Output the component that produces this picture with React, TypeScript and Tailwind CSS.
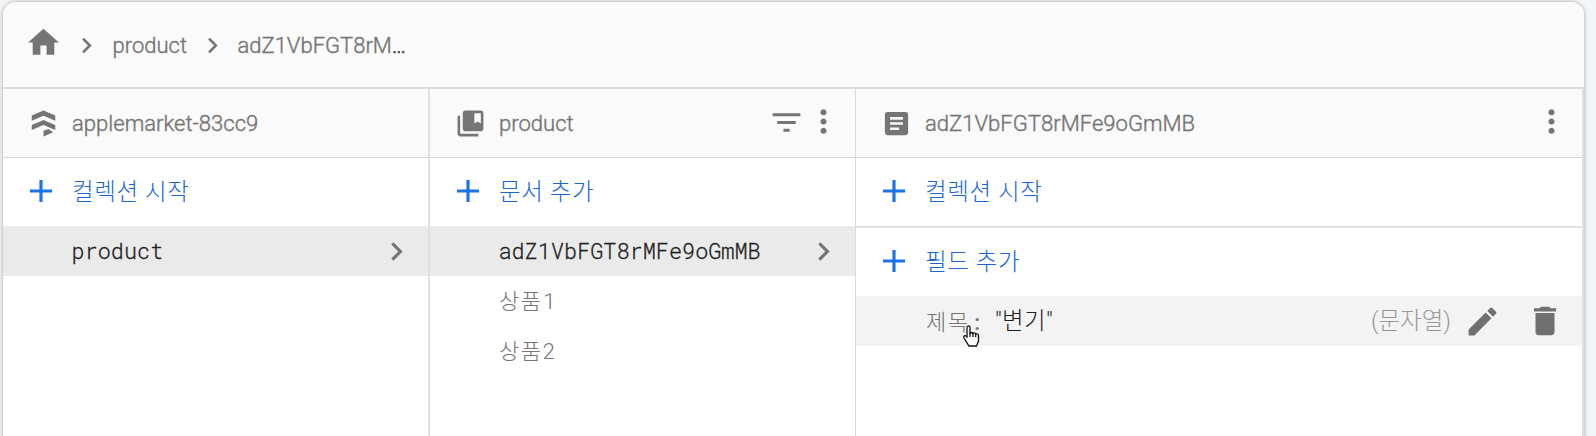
import type { ReactNode } from "react";

const KR = "font-['Roboto','Noto_Sans_CJK_KR',sans-serif]";

function Icon({ d, size, className = "" }: { d: string; size: number; className?: string }) {
  return (
    <svg width={size} height={size} viewBox="0 0 24 24" fill="currentColor" className={`shrink-0 ${className}`}>
      <path d={d} />
    </svg>
  );
}

const paths = {
  home: "M10 20v-6h4v6h5v-8h3L12 3 2 12h3v8z",
  chevron: "M10 6 8.59 7.41 13.17 12l-4.58 4.59L10 18l6-6z",
  plus: "M19 13h-6v6h-2v-6H5v-2h6V5h2v6h6z",
  filter: "M10 18h4v-2h-4zM3 6v2h18V6zm3 7h12v-2H6z",
  more: "M12 8c1.1 0 2-.9 2-2s-.9-2-2-2-2 .9-2 2 .9 2 2 2m0 2c-1.1 0-2 .9-2 2s.9 2 2 2 2-.9 2-2-.9-2-2-2m0 6c-1.1 0-2 .9-2 2s.9 2 2 2 2-.9 2-2-.9-2-2-2",
  edit: "M3 17.25V21h3.75L17.81 9.94l-3.75-3.75zM20.71 7.04c.39-.39.39-1.02 0-1.41l-2.34-2.34a.996.996 0 0 0-1.41 0l-1.83 1.83 3.75 3.75z",
  trash: "M6 19c0 1.1.9 2 2 2h8c1.1 0 2-.9 2-2V7H6zM19 4h-3.5l-1-1h-5l-1 1H5v2h14z",
  collection: "M4 6H2v14c0 1.1.9 2 2 2h14v-2H4zm16-4H8c-1.1 0-2 .9-2 2v12c0 1.1.9 2 2 2h12c1.1 0 2-.9 2-2V4c0-1.1-.9-2-2-2m0 10-2.5-1.5L15 12V4h5z",
  document: "M19 3H5c-1.1 0-2 .9-2 2v14c0 1.1.9 2 2 2h14c1.1 0 2-.9 2-2V5c0-1.1-.9-2-2-2m-5 14H7v-2h7zm3-4H7v-2h10zm0-4H7V7h10z",
  firestore: "M12 2 2.900 5.900V9.800L12 6l9.100 3.800V5.900zM12 9.200 2.900 13.100V17L12 13.100l9.100 3.900v-3.900zM12 17.700v4.300l7.500-3.200-3.700-2.600z",
};

function PanelHeader({ icon, title, children }: { icon: string; title: string; children?: ReactNode }) {
  return (
    <div className="flex h-[69px] items-center border-b-[1.500px] border-[#d6d6d6] bg-[#fafafa] pl-[25px] text-[#757575]">
      <Icon d={icon} size={31} />
      <span className="mt-[2px] ml-[13px] flex-1 text-[22.050px] leading-[30px] font-light text-[#757575] [-webkit-text-stroke:0.4px_currentColor]">{title}</span>
      {children}
    </div>
  );
}

function AddRow({ label }: { label: string }) {
  return (
    <div className="flex h-[68px] items-center pl-[19px] text-[#1a73e8]">
      <Icon d={paths.plus} size={38} className="-mt-[2px]" />
      <span className="ml-[12px] text-[23.500px] leading-[32px] font-light tracking-[0.6px] text-[#1967d2]">{label}</span>
    </div>
  );
}

function Item({ label, selected }: { label: string; selected?: boolean }) {
  return (
    <div className={`flex h-[50px] items-center pr-[13px] ${selected ? "bg-[#eaeaea] pl-[68.500px] text-[#212121]" : "pl-[69px] text-[#757575]"}`}>
      <span className={`flex-1 font-['Roboto_Mono','Noto_Sans_CJK_KR',monospace] leading-[30px] font-light ${selected ? "text-[21.850px] [-webkit-text-stroke:0.3px_currentColor]" : "text-[22px] tracking-[1.600px]"}`}>{label}</span>
      {selected && <Icon d={paths.chevron} size={37} className="text-[#757575]" />}
    </div>
  );
}

export default function App() {
  return (
    <div className={`h-[436px] overflow-hidden bg-[#f4f5f7] pt-[2px] pl-[3px] ${KR}`}>
      <div className="h-[450px] w-[1581px] overflow-hidden rounded-t-[13px] bg-white shadow-[0_0_4px_rgba(0,0,0,0.35)]">
        <div className="flex h-[87px] items-center border-b-2 border-[#dedede] bg-[#fafafa] pl-[22px] text-[22px] font-light text-[#757575]">
          <Icon d={paths.home} size={37} className="-mt-[5px]" />
          <Icon d={paths.chevron} size={31} className="mt-[2px] ml-[9px]" />
          <span className="mt-[2px] ml-[10.500px] [-webkit-text-stroke:0.4px_currentColor]">product</span>
          <Icon d={paths.chevron} size={31} className="mt-[2px] ml-[10px]" />
          <span className="mt-[2px] ml-[9.500px] [-webkit-text-stroke:0.4px_currentColor]">adZ1VbFGT8rM<span className="text-[#212121]">…</span></span>
        </div>
        <div className="grid h-[363px] grid-cols-[427px_426px_1fr]">
          <section className="border-r-2 border-[#e0e0e0]">
            <PanelHeader icon={paths.firestore} title="applemarket-83cc9" />
            <AddRow label="컬렉션 시작" />
            <Item label="product" selected />
          </section>
          <section className="border-r-[1.500px] border-[#dadada]">
            <PanelHeader icon={paths.collection} title="product">
              <Icon d={paths.filter} size={37} className="-mt-[2px]" />
              <Icon d={paths.more} size={37} className="mr-[13px] -mt-[3px]" />
            </PanelHeader>
            <AddRow label="문서 추가" />
            <Item label="adZ1VbFGT8rMFe9oGmMB" selected />
            <Item label="상품1" />
            <Item label="상품2" />
          </section>
          <section className="border-r-2 border-[#dedede]">
            <PanelHeader icon={paths.document} title="adZ1VbFGT8rMFe9oGmMB">
              <Icon d={paths.more} size={37} className="mr-[12px] -mt-[3px]" />
            </PanelHeader>
            <AddRow label="컬렉션 시작" />
            <div className="border-t-2 border-[#e0e0e0]">
              <AddRow label="필드 추가" />
            </div>
            <div className="flex h-[50px] items-center bg-[#f3f3f3] pl-[70px] text-[22px] leading-[30px] font-light">
              <div className="relative mt-[2px] w-[69px] text-[#757575]">
                <span className="tracking-[1.600px]">제목</span>
                <span className="font-['Roboto_Mono'] font-normal">:</span>
                <svg width="18" height="23" viewBox="0 0 18 23" className="absolute top-[18px] left-[36px]">
                  <path d="M5 2.500C5 .5 8 .5 8 2.500V9c0-2 3-2 3 0 0-1.500 2.700-1.500 2.700.5 0-1 2.800-1 2.800 1V16l-2 5H7l-5-8c-1-2 1-3 2-2l1 1z" fill="white" stroke="#111" strokeWidth="1.300" />
                  <path d="M8 8v4M11 8v4M13.700 9v3" stroke="#111" strokeWidth="1.300" />
                </svg>
              </div>
              <span className="flex-1 text-[23.500px] tracking-[0.3px] text-[#212121]">"변기"</span>
              <span className="text-[23.500px] text-[#999]">(문자열)</span>
              <Icon d={paths.edit} size={37} className="ml-[13px] text-[#707070]" />
              <Icon d={paths.trash} size={38} className="mr-[18px] ml-[25px] text-[#707070]" />
            </div>
          </section>
        </div>
      </div>
    </div>
  );
}
